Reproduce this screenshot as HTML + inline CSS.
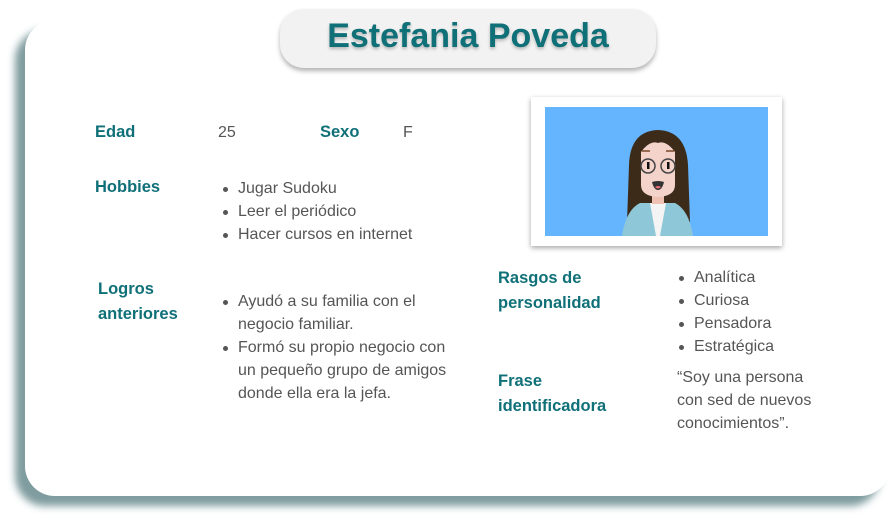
<!DOCTYPE html>
<html><head><meta charset="utf-8"><style>
body{margin:0;width:894px;height:525px;background:#fff;position:relative;overflow:hidden;font-family:"Liberation Sans",sans-serif}
.card{position:absolute;left:25px;top:20px;width:865px;height:476px;background:#fff;border-radius:30px;box-shadow:-10px 10px 8px #7f9c9f}
.pill{position:absolute;left:280px;top:9px;width:376px;height:59px;background:#f2f2f2;border-radius:24px;box-shadow:0 3px 5px rgba(0,0,0,.3);text-align:center;line-height:54px;font-size:34px;font-weight:bold;color:#0f7078;text-shadow:0 2px 3px rgba(0,0,0,.25)}
.a{position:absolute;font-size:16px;line-height:25px}
.t{color:#0f7078;font-weight:bold;font-size:16.5px}
.g{color:#555}
ul{margin:0;padding:0;list-style:none}
li{position:relative;padding-left:17px;line-height:23px}
li:before{content:"";position:absolute;left:2px;top:10px;width:5px;height:5px;border-radius:50%;background:#555}
.frame{position:absolute;left:531px;top:97px;width:251px;height:149px;background:#fff;box-shadow:0 2px 5px rgba(0,0,0,.35)}
</style></head><body>
<div class="card"></div>
<div class="pill">Estefania Poveda</div>
<div class="a t" style="left:95px;top:120px">Edad</div>
<div class="a g" style="left:218px;top:120px">25</div>
<div class="a t" style="left:320px;top:120px">Sexo</div>
<div class="a g" style="left:403px;top:120px">F</div>
<div class="a t" style="left:95px;top:175px">Hobbies</div>
<div class="a g" style="left:221px;top:177px"><ul><li>Jugar Sudoku</li><li>Leer el periódico</li><li>Hacer cursos en internet</li></ul></div>
<div class="a t" style="left:98px;top:277px">Logros<br>anteriores</div>
<div class="a g" style="left:221px;top:290px;width:235px"><ul><li>Ayudó a su familia con el negocio familiar.</li><li>Formó su propio negocio con un pequeño grupo de amigos donde ella era la jefa.</li></ul></div>
<div class="a t" style="left:498px;top:266px">Rasgos de<br>personalidad</div>
<div class="a g" style="left:677px;top:266px"><ul><li>Analítica</li><li>Curiosa</li><li>Pensadora</li><li>Estratégica</li></ul></div>
<div class="a t" style="left:498px;top:369px">Frase<br>identificadora</div>
<div class="a g" style="left:677px;top:366px;width:145px;line-height:23px">“Soy una persona con sed de nuevos conocimientos”.</div>
<div class="frame">
<svg width="251" height="149" style="position:absolute;left:0;top:0">
<rect x="14" y="10" width="223" height="129" fill="#64b5fe"/>
<g transform="translate(-531,-97)">
<path d="M627 222 L629 165 Q630 131 658 130 Q686 131 688 165 L690 222 Z" fill="#3d2b1a"/>
<path d="M622 236 Q626 210 640 203 L675 203 Q689 210 693 236 Z" fill="#8ec8d8"/>
<path d="M650 203 L656 236 L660 236 L666 203 Z" fill="#f4f4f4"/>
<rect x="652" y="190" width="12" height="14" fill="#eec1b2"/>
<path d="M641 152 Q641 143 650 142 L666 142 Q675 143 675 152 L675 185 Q675 196 658 197 Q641 196 641 185 Z" fill="#f3d3ca"/>
<path d="M641 152 Q650 140 658 143 Q666 140 675 152 L675 145 Q658 133 641 145 Z" fill="#3d2b1a"/>
<path d="M642 151 L650 151 M666 151 L674 151" stroke="#7a4a2a" stroke-width="1.5"/>
<circle cx="648" cy="166" r="7" fill="none" stroke="#444" stroke-width="1.5"/>
<circle cx="668" cy="166" r="7" fill="none" stroke="#444" stroke-width="1.5"/>
<rect x="647" y="162" width="2.5" height="7" fill="#111"/><rect x="667" y="162" width="2.5" height="7" fill="#111"/>
<path d="M652 182 Q658 180 664 182 Q662 190 658 190 Q654 190 652 182 Z" fill="#333"/>
<path d="M655 187 Q658 185 661 187 Q658 190 655 187Z" fill="#f0707a"/>
</g></svg></div>
</body></html>
